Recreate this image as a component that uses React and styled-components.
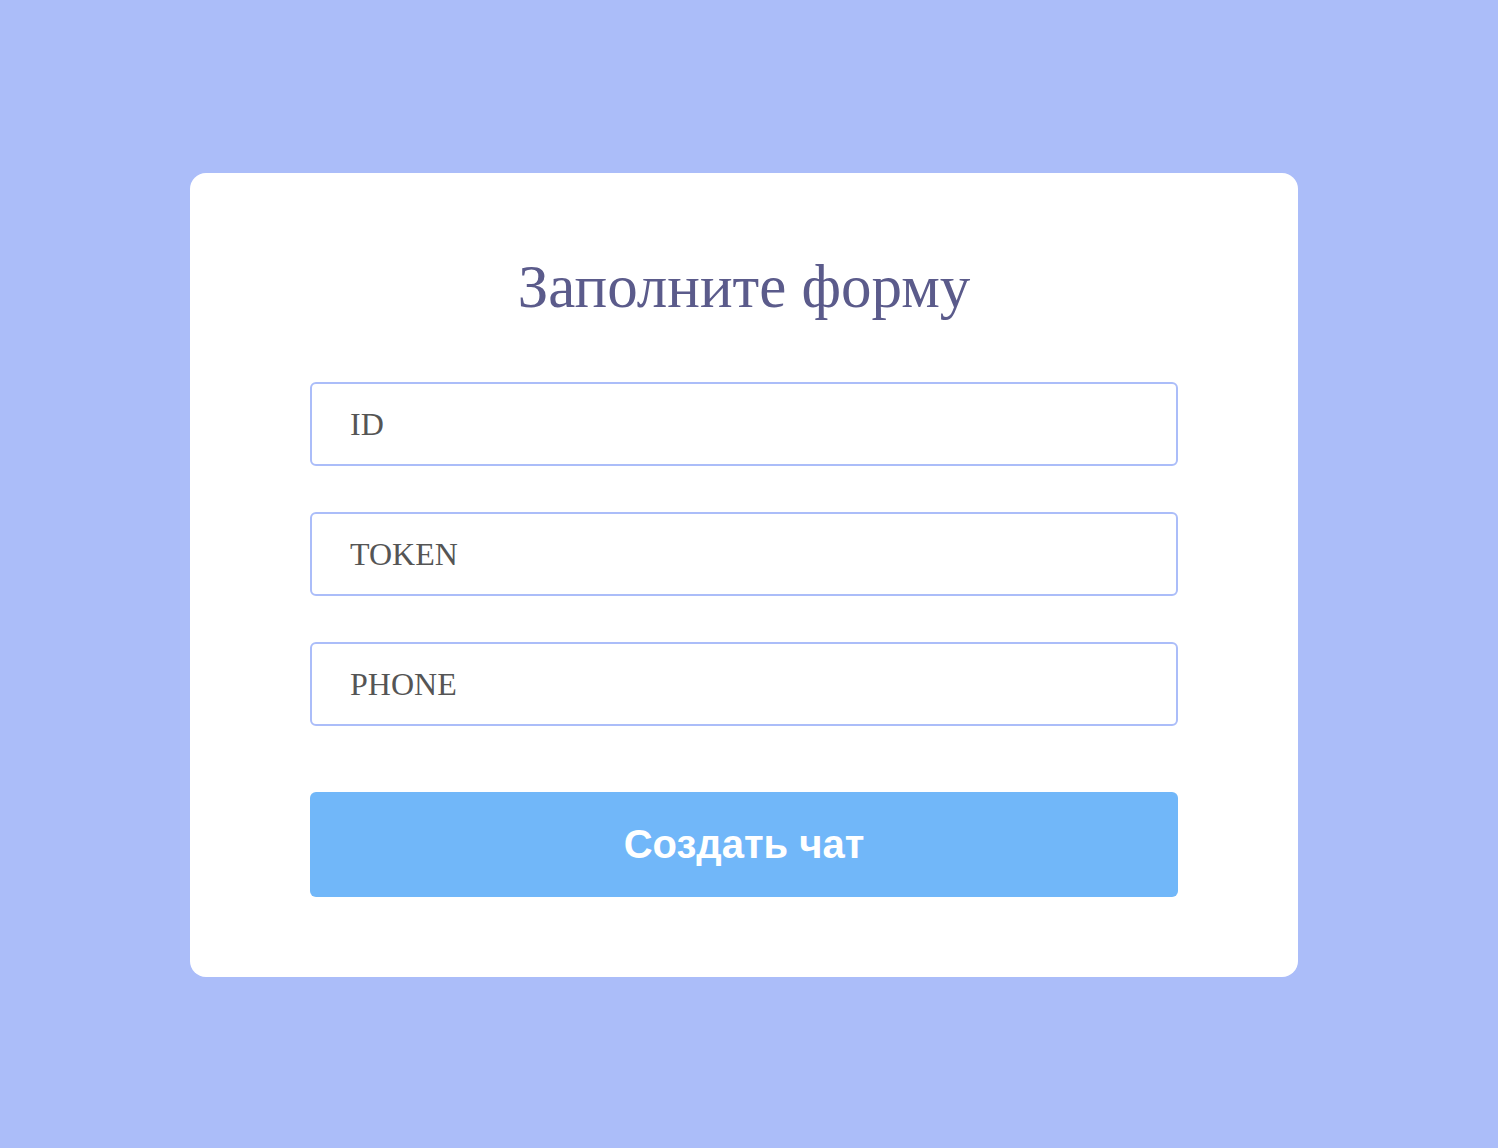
import React from 'react'
import styled, { createGlobalStyle } from 'styled-components'

const GlobalStyle = createGlobalStyle`
  html, body {
    margin: 0;
    padding: 0;
    background: #abbdf9;
  }
  * {
    box-sizing: border-box;
  }
`

const Page = styled.main`
  min-height: 1148px;
  display: flex;
  align-items: center;
  justify-content: center;
  padding-right: 10px;
  padding-top: 2px;
`

const Card = styled.form`
  width: 1108px;
  height: 804px;
  background: #fff;
  border-radius: 16px;
  padding: 77px 120px 0;
  display: flex;
  flex-direction: column;
`

const Title = styled.h1`
  margin: 0 0 58px;
  text-align: center;
  font-family: "Liberation Serif", "Times New Roman", serif;
  font-weight: 400;
  font-size: 61px;
  line-height: 74px;
  color: #5b5b8b;
`

const Field = styled.input`
  height: 84px;
  width: 100%;
  margin-bottom: ${(p) => p.$gap}px;
  border: 2px solid #abbdf9;
  border-radius: 6px;
  padding: 0 38px;
  font-family: "Liberation Serif", "Times New Roman", serif;
  font-size: 32px;
  color: #555;
  outline: none;
  &::placeholder {
    color: #555;
  }
`

const Submit = styled.button`
  height: 105px;
  width: 100%;
  border: none;
  border-radius: 6px;
  background: #71b7f9;
  color: #fff;
  font-family: "Liberation Sans", Arial, sans-serif;
  font-weight: 700;
  font-size: 40px;
  cursor: pointer;
`

const App = () => {
  return (
    <>
      <GlobalStyle />
      <Page>
        <Card onSubmit={(e) => e.preventDefault()}>
          <Title>Заполните форму</Title>
          <Field placeholder="ID" $gap={46} />
          <Field placeholder="TOKEN" $gap={46} />
          <Field placeholder="PHONE" $gap={66} />
          <Submit type="submit">Создать чат</Submit>
        </Card>
      </Page>
    </>
  )
}

export default App
